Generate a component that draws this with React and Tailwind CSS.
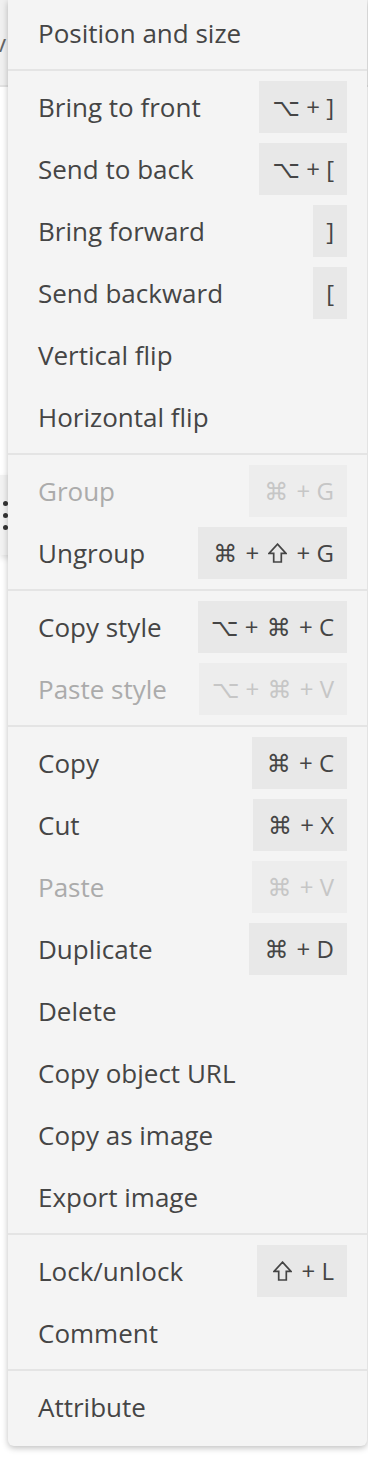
const sections = [
  [{ label: "Position and size" }],
  [
    { label: "Bring to front", keys: ["⌥", "]"] },
    { label: "Send to back", keys: ["⌥", "["] },
    { label: "Bring forward", keys: ["]"] },
    { label: "Send backward", keys: ["["] },
    { label: "Vertical flip" },
    { label: "Horizontal flip" },
  ],
  [
    { label: "Group", keys: ["⌘", "G"], disabled: true },
    { label: "Ungroup", keys: ["⌘", "shift", "G"] },
  ],
  [
    { label: "Copy style", keys: ["⌥", "⌘", "C"] },
    { label: "Paste style", keys: ["⌥", "⌘", "V"], disabled: true },
  ],
  [
    { label: "Copy", keys: ["⌘", "C"] },
    { label: "Cut", keys: ["⌘", "X"] },
    { label: "Paste", keys: ["⌘", "V"], disabled: true },
    { label: "Duplicate", keys: ["⌘", "D"] },
    { label: "Delete" },
    { label: "Copy object URL" },
    { label: "Copy as image" },
    { label: "Export image" },
  ],
  [
    { label: "Lock/unlock", keys: ["shift", "L"] },
    { label: "Comment" },
  ],
  [{ label: "Attribute" }],
];

function ShiftIcon() {
  return (
    <svg
      className="mx-[3px] h-[20px] w-[19px] max-w-none shrink-0"
      viewBox="0 0 19 20"
      fill="none"
      stroke="currentColor"
      strokeWidth="1.7"
    >
      <path d="M9.5 1.2 L18 10.4 H13.3 V19 H5.7 V10.4 H1 Z" />
    </svg>
  );
}

function Key({ k }) {
  if (k === "shift") return <ShiftIcon />;
  if (k === "⌘") return <span className="mx-[2px]">⌘</span>;
  return <span>{k}</span>;
}

function MenuItem({ item }) {
  return (
    <div className="flex h-[62px] items-center justify-between pl-[30px] pr-[20px]">
      <span
        className={`text-[26px] leading-none ${
          item.disabled ? "text-[#ababab]" : "text-[#454545]"
        }`}
      >
        {item.label}
      </span>
      {item.keys && (
        <span
          className={`flex h-[52px] shrink-0 items-center whitespace-pre px-[13px] text-[24px] leading-none ${
            item.disabled
              ? "bg-[#ededed] text-[#c6c6c6]"
              : "bg-[#e8e8e8] text-[#454545]"
          }`}
        >
          {item.keys.map((k, i) => (
            <span key={i} className="flex shrink-0 items-center">
              {i > 0 && " + "}
              <Key k={k} />
            </span>
          ))}
        </span>
      )}
    </div>
  );
}

export default function App() {
  return (
    <div
      className="relative h-[1460px] w-[368px] overflow-hidden bg-white"
      style={{ fontFamily: '"Open Sans", "DejaVu Sans", sans-serif' }}
    >
      {/* page behind the menu */}
      <div className="flex h-[87px] items-center border-b-2 border-[#e2e2e2] bg-[#f0f0f0]">
        <span className="-ml-[6px] text-[24px] text-[#666]">v</span>
      </div>
      <div className="mt-[388px] flex h-[80px] w-[40px] flex-col items-start justify-center gap-[7px] bg-[#f2f2f2] pl-[3px] shadow-[0_3px_6px_rgba(0,0,0,0.12)]">
        <span className="h-[5px] w-[5px] rounded-full bg-[#333]" />
        <span className="h-[5px] w-[5px] rounded-full bg-[#333]" />
        <span className="h-[5px] w-[5px] rounded-full bg-[#333]" />
      </div>

      {/* context menu */}
      <div className="absolute left-[8px] top-0 w-[359px] rounded-b-[6px] bg-[#f4f4f4] pt-[2px] pb-[8px] shadow-[0_2px_6px_rgba(0,0,0,0.25)]">
        {sections.map((items, i) => (
          <div
            key={i}
            className={
              i === 0
                ? "pb-[5px]"
                : "border-t-2 border-[#e4e4e4] py-[5px] last:pb-0"
            }
          >
            {items.map((item) => (
              <MenuItem key={item.label} item={item} />
            ))}
          </div>
        ))}
      </div>
    </div>
  );
}
